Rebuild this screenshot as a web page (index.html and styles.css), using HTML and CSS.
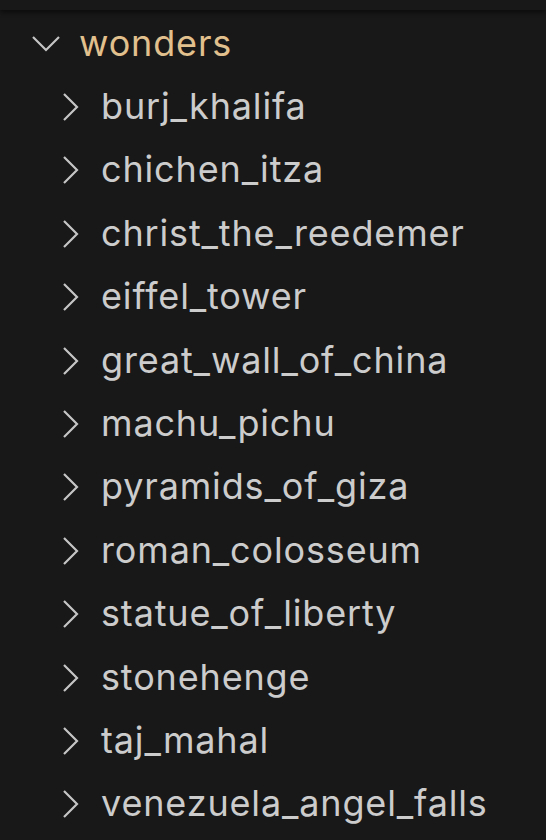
FILE: index.html
```html
<!DOCTYPE html>
<html>
<head>
<meta charset="utf-8">
<link rel="stylesheet" href="styles.css">
</head>
<body>
<div class="topbar"></div>
<div class="tree">
  <div class="row folder open">
    <span class="twist"><svg width="30" height="18" viewBox="0 0 30 18"><path d="M2 2 L15 15 L28 2" fill="none" stroke="#c5c5c5" stroke-width="2.2"/></svg></span>
    <span class="label">wonders</span>
  </div>
  <div class="children">
    <div class="row"><span class="twist"><svg width="18" height="30" viewBox="0 0 18 30"><path d="M2 2 L15 15 L2 28" fill="none" stroke="#c5c5c5" stroke-width="2.2"/></svg></span><span class="label">burj_khalifa</span></div>
    <div class="row"><span class="twist"><svg width="18" height="30" viewBox="0 0 18 30"><path d="M2 2 L15 15 L2 28" fill="none" stroke="#c5c5c5" stroke-width="2.2"/></svg></span><span class="label">chichen_itza</span></div>
    <div class="row"><span class="twist"><svg width="18" height="30" viewBox="0 0 18 30"><path d="M2 2 L15 15 L2 28" fill="none" stroke="#c5c5c5" stroke-width="2.2"/></svg></span><span class="label">christ_the_reedemer</span></div>
    <div class="row"><span class="twist"><svg width="18" height="30" viewBox="0 0 18 30"><path d="M2 2 L15 15 L2 28" fill="none" stroke="#c5c5c5" stroke-width="2.2"/></svg></span><span class="label">eiffel_tower</span></div>
    <div class="row"><span class="twist"><svg width="18" height="30" viewBox="0 0 18 30"><path d="M2 2 L15 15 L2 28" fill="none" stroke="#c5c5c5" stroke-width="2.2"/></svg></span><span class="label">great_wall_of_china</span></div>
    <div class="row"><span class="twist"><svg width="18" height="30" viewBox="0 0 18 30"><path d="M2 2 L15 15 L2 28" fill="none" stroke="#c5c5c5" stroke-width="2.2"/></svg></span><span class="label">machu_pichu</span></div>
    <div class="row"><span class="twist"><svg width="18" height="30" viewBox="0 0 18 30"><path d="M2 2 L15 15 L2 28" fill="none" stroke="#c5c5c5" stroke-width="2.2"/></svg></span><span class="label">pyramids_of_giza</span></div>
    <div class="row"><span class="twist"><svg width="18" height="30" viewBox="0 0 18 30"><path d="M2 2 L15 15 L2 28" fill="none" stroke="#c5c5c5" stroke-width="2.2"/></svg></span><span class="label">roman_colosseum</span></div>
    <div class="row"><span class="twist"><svg width="18" height="30" viewBox="0 0 18 30"><path d="M2 2 L15 15 L2 28" fill="none" stroke="#c5c5c5" stroke-width="2.2"/></svg></span><span class="label">statue_of_liberty</span></div>
    <div class="row"><span class="twist"><svg width="18" height="30" viewBox="0 0 18 30"><path d="M2 2 L15 15 L2 28" fill="none" stroke="#c5c5c5" stroke-width="2.2"/></svg></span><span class="label">stonehenge</span></div>
    <div class="row"><span class="twist"><svg width="18" height="30" viewBox="0 0 18 30"><path d="M2 2 L15 15 L2 28" fill="none" stroke="#c5c5c5" stroke-width="2.2"/></svg></span><span class="label">taj_mahal</span></div>
    <div class="row"><span class="twist"><svg width="18" height="30" viewBox="0 0 18 30"><path d="M2 2 L15 15 L2 28" fill="none" stroke="#c5c5c5" stroke-width="2.2"/></svg></span><span class="label">venezuela_angel_falls</span></div>
  </div>
</div>
</body>
</html>
```
FILE: styles.css
```css
html, body {
  margin: 0;
  padding: 0;
  background: #181818;
  height: 100%;
  overflow: hidden;
}
body {
  font-family: Inter, "Noto Sans", sans-serif;
}
.topbar {
  height: 10px;
  background: #181818;
  box-shadow: 0 3px 4px rgba(0,0,0,0.45);
  position: relative;
  z-index: 1;
}
.tree {
  padding-top: 2px;
}
.row {
  height: 63.4px;
  display: flex;
  align-items: center;
  color: #cccccc;
  font-size: 36px;
  letter-spacing: 0.85px;
  white-space: nowrap;
}
.row .twist {
  display: flex;
  align-items: center;
  justify-content: center;
}
.folder {
  padding-left: 31px;
}
.folder .twist {
  width: 30px;
  margin-right: 18px;
}
.folder .label {
  color: #e2c08d;
}
.children .row {
  padding-left: 62px;
}
.children .twist {
  width: 18px;
  margin-right: 21px;
}
.label {
  position: relative;
  top: -1px;
}
```
